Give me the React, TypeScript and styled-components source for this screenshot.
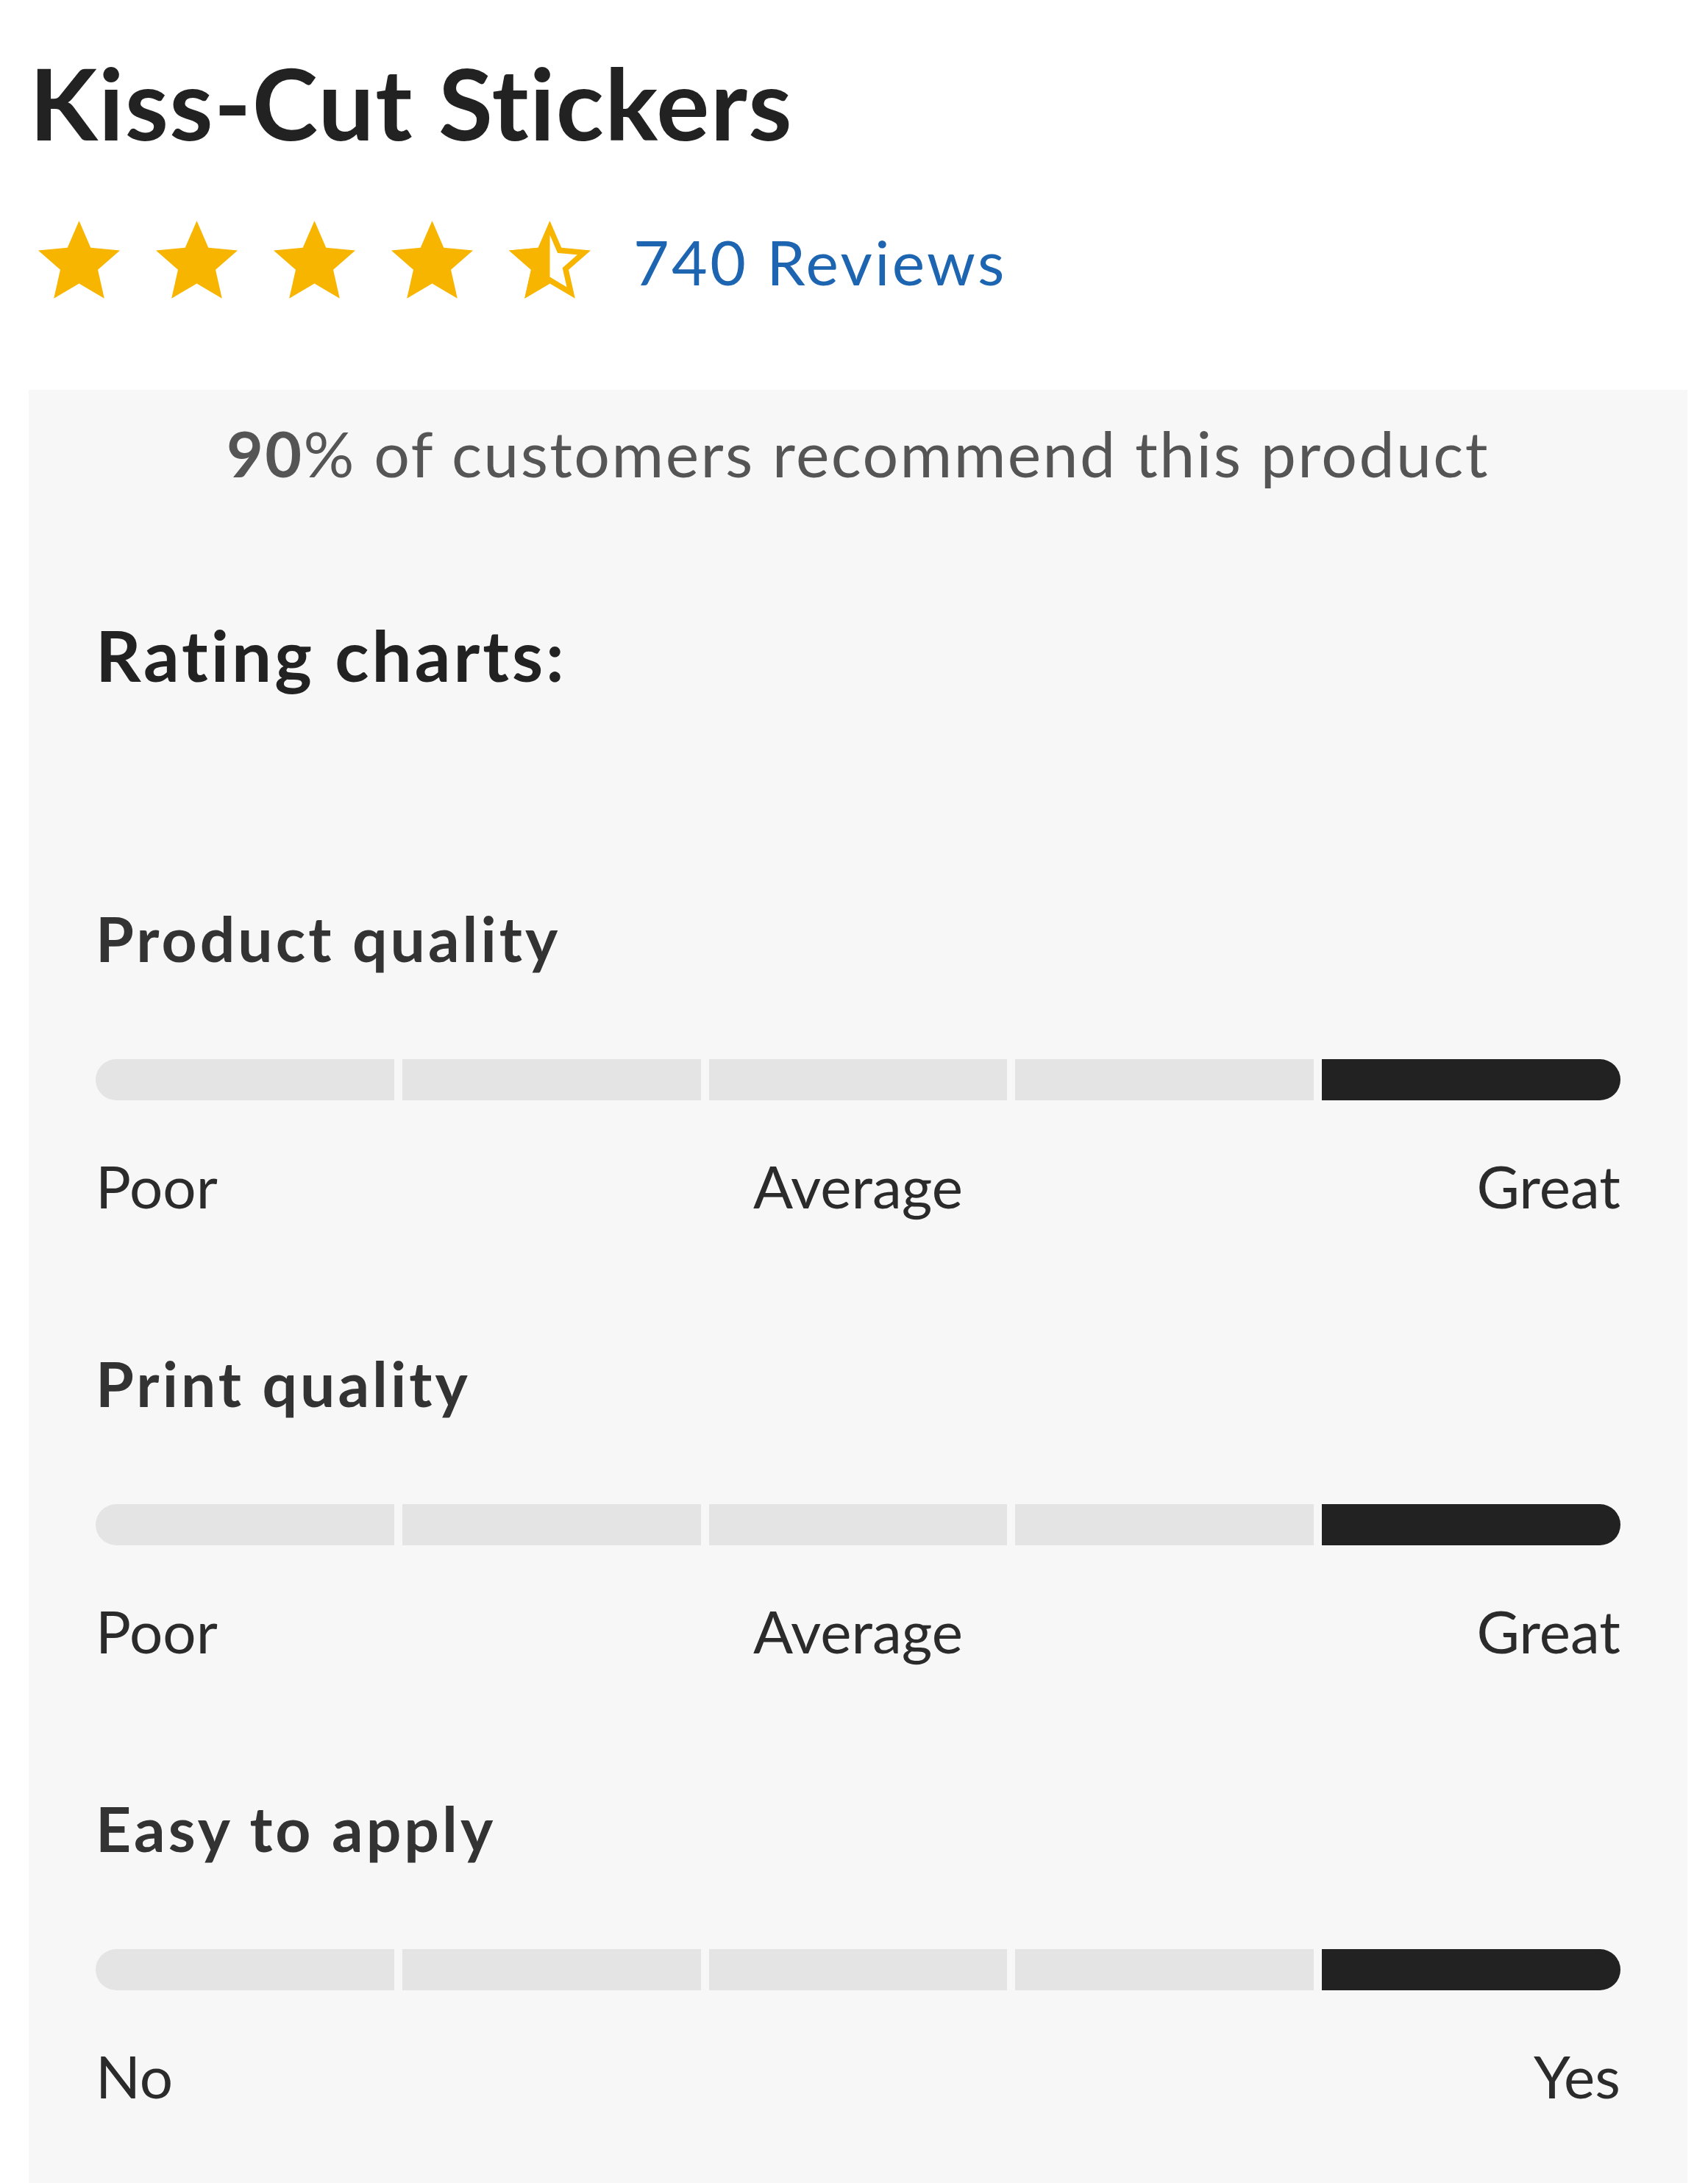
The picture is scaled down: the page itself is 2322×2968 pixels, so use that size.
import React from "react";
import styled, { createGlobalStyle } from "styled-components";

const GlobalStyle = createGlobalStyle`
  body {
    margin: 0;
    background: #ffffff;
    font-family: Lato, "Liberation Sans", sans-serif;
  }
`;

const Page = styled.div`
  width: 2322px;
  min-height: 2968px;
  background: #ffffff;
`;

const Header = styled.header`
  padding: 72px 0 0 32px;
`;

const Title = styled.h1`
  margin: 0 0 0 8px;
  font-size: 135px;
  line-height: 1;
  font-weight: 700;
  letter-spacing: 1.4px;
  color: #222222;
`;

const RatingRow = styled.div`
  display: flex;
  align-items: center;
  margin-top: 93px;
  padding-left: 20px;
`;

const Stars = styled.div`
  display: flex;
  gap: 49px;
`;

const ReviewLink = styled.a`
  margin-left: 58px;
  padding-top: 5px;
  font-size: 84px;
  line-height: 1;
  letter-spacing: 3.4px;
  color: #1d65b0;
  text-decoration: none;
`;

const Panel = styled.section`
  margin: 124px 28px 0 39px;
  padding: 43px 91px 111px;
  background: #f7f7f7;
`;

const Recommend = styled.p`
  margin: 0;
  text-align: center;
  font-size: 86px;
  line-height: 1;
  letter-spacing: 2.4px;
  color: #555555;

  strong {
    font-weight: 700;
  }
`;

const ChartsTitle = styled.h2`
  margin: 183px 0 0;
  font-size: 96px;
  line-height: 1;
  font-weight: 700;
  letter-spacing: 4px;
  color: #222222;
`;

const ChartList = styled.div`
  display: flex;
  flex-direction: column;
  gap: 187px;
  margin-top: 296px;
`;

const ChartName = styled.h3`
  margin: 0;
  font-size: 84px;
  line-height: 1;
  font-weight: 700;
  letter-spacing: 4px;
  color: #333333;
`;

const SegmentBar = styled.div`
  display: grid;
  grid-template-columns: repeat(5, 1fr);
  gap: 11px;
  height: 56px;
  margin-top: 122px;
`;

const Segment = styled.div<{ $active: boolean }>`
  background: ${(p) => (p.$active ? "#222222" : "#e4e4e4")};

  &:first-child {
    border-radius: 28px 0 0 28px;
  }
  &:last-child {
    border-radius: 0 28px 28px 0;
  }
`;

const Scale = styled.div`
  display: grid;
  grid-template-columns: 1fr auto 1fr;
  margin-top: 76px;
  font-size: 80px;
  line-height: 1;
  color: #2b2b2b;
`;

const Tick = styled.span<{ $align: "start" | "center" | "end" }>`
  grid-column: ${(p) => (p.$align === "start" ? 1 : p.$align === "center" ? 2 : 3)};
  justify-self: ${(p) => p.$align};
`;

const STAR =
  "M0,-50 L13.52,-18.61 L47.55,-15.45 L21.87,7.11 L29.39,40.45 L0,23 L-29.39,40.45 L-21.87,7.11 L-47.55,-15.45 L-13.52,-18.61 Z";

const GOLD = "#f7b500";

function Star({ half = false, id }: { half?: boolean; id: string }) {
  return (
    <svg width="111" height="106" viewBox="-47.55 -50 95.1 90.45">
      {half ? (
        <>
          <defs>
            <clipPath id={id}>
              <path d={STAR} />
            </clipPath>
          </defs>
          <g clipPath={`url(#${id})`}>
            <rect x="-48" y="-50" width="48" height="91" fill={GOLD} />
            <path d={STAR} fill="none" stroke={GOLD} strokeWidth="13" />
          </g>
        </>
      ) : (
        <path d={STAR} fill={GOLD} />
      )}
    </svg>
  );
}

const charts = [
  { name: "Product quality", value: 5, labels: ["Poor", "Average", "Great"] },
  { name: "Print quality", value: 5, labels: ["Poor", "Average", "Great"] },
  { name: "Easy to apply", value: 5, labels: ["No", "Yes"] },
];

function alignFor(i: number, count: number) {
  if (i === 0) return "start";
  if (i === count - 1) return "end";
  return "center";
}

export default function App() {
  return (
    <Page>
      <GlobalStyle />
      <Header>
        <Title>Kiss-Cut Stickers</Title>
        <RatingRow>
          <Stars>
            <Star id="s1" />
            <Star id="s2" />
            <Star id="s3" />
            <Star id="s4" />
            <Star id="s5" half />
          </Stars>
          <ReviewLink href="#reviews">740 Reviews</ReviewLink>
        </RatingRow>
      </Header>

      <Panel>
        <Recommend>
          <strong>90</strong>% of customers recommend this product
        </Recommend>
        <ChartsTitle>Rating charts:</ChartsTitle>
        <ChartList>
          {charts.map((c) => (
            <div key={c.name}>
              <ChartName>{c.name}</ChartName>
              <SegmentBar>
                {[1, 2, 3, 4, 5].map((n) => (
                  <Segment key={n} $active={n === c.value} />
                ))}
              </SegmentBar>
              <Scale>
                {c.labels.map((l, i) => (
                  <Tick key={l} $align={alignFor(i, c.labels.length)}>
                    {l}
                  </Tick>
                ))}
              </Scale>
            </div>
          ))}
        </ChartList>
      </Panel>
    </Page>
  );
}
